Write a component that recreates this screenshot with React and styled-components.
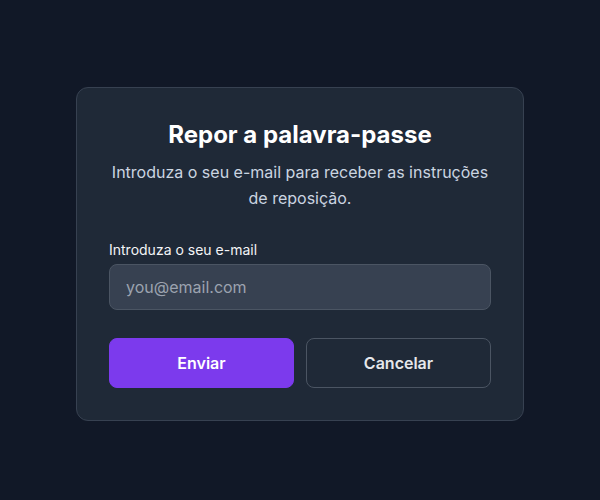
import React from 'react'
import styled, { createGlobalStyle } from 'styled-components'

const GlobalStyle = createGlobalStyle`
    * { box-sizing: border-box; }
    html, body {
        margin: 0;
        padding: 0;
        background: #111827;
        font-family: Inter, "Noto Sans", sans-serif;
    }
`

const ResetPage = () => {
    return (
        <Wrapper>
            <GlobalStyle />
            <Card>
                <Title>Repor a palavra-passe</Title>
                <Subtitle>Introduza o seu e-mail para receber as instruções de reposição.</Subtitle>
                <Field>
                    <Label htmlFor="email">Introduza o seu e-mail</Label>
                    <Input id="email" type="email" placeholder="you@email.com" />
                </Field>
                <Actions>
                    <Button variant="primary">Enviar</Button>
                    <Button variant="ghost">Cancelar</Button>
                </Actions>
            </Card>
        </Wrapper>
    );
}

const Wrapper = styled.div`
    width: 600px;
    height: 500px;
    display: flex;
    align-items: center;
    justify-content: center;
    background: #111827;
`

const Card = styled.div`
    width: 448px;
    margin-top: 7px;
    padding: 31px 32px 32px;
    background: #1f2937;
    border: 1px solid #374151;
    border-radius: 12px;
`

const Title = styled.h1`
    margin: 0;
    color: #ffffff;
    font-size: 24px;
    line-height: 32px;
    font-weight: 700;
    text-align: center;
`

const Subtitle = styled.p`
    margin: 8px 0 0;
    color: #cbd5e1;
    font-size: 16px;
    line-height: 26px;
    text-align: center;
`

const Field = styled.div`
    margin-top: 29px;
    display: flex;
    flex-direction: column;
    gap: 4px;
`

const Label = styled.label`
    color: #f3f4f6;
    font-size: 14px;
    line-height: 20px;
    font-weight: 400;
`

const Input = styled.input`
    height: 46px;
    padding: 0 16px;
    background: #374151;
    border: 1px solid #4b5563;
    border-radius: 8px;
    color: #f3f4f6;
    font-family: inherit;
    font-size: 16px;
    outline: none;
    &::placeholder {
        color: #9ca3af;
    }
`

const Actions = styled.div`
    margin-top: 28px;
    display: grid;
    grid-template-columns: 1fr 1fr;
    gap: 12px;
`

const Button = styled.button`
    height: 50px;
    border-radius: 8px;
    font-family: inherit;
    font-size: 16px;
    font-weight: 600;
    cursor: pointer;
    color: ${(props) => props.variant === 'primary' ? '#ffffff' : '#e5e7eb'};
    background: ${(props) => props.variant === 'primary' ? '#7c3aed' : 'transparent'};
    border: 1px solid ${(props) => props.variant === 'primary' ? '#7c3aed' : '#4b5563'};
`

export default ResetPage;
